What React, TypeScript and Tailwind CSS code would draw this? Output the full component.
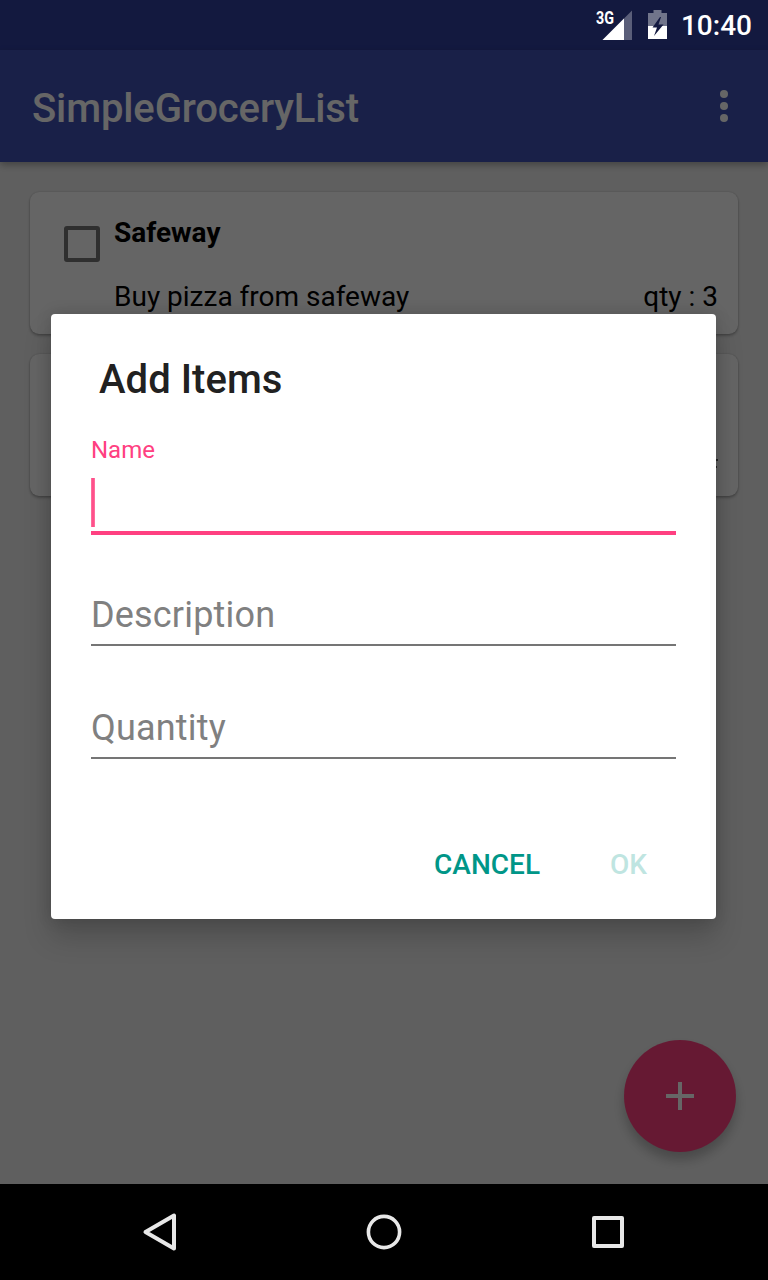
import React from "react";
import type { ReactNode } from "react";

function StatusBar() {
  return (
    <div className="relative z-20 flex h-[50px] items-center justify-end pr-4 text-white">
      <svg width="40" height="34" viewBox="0 0 40 34" className="mr-[12px]">
        <path d="M36 2.5V32H6.500Z" fill="#fff" fillOpacity="0.3" />
        <path d="M28 10.500V32H6.500Z" fill="#fff" />
        <text x="0" y="16" fontFamily="Roboto" fontSize="17.5" fontWeight="700" fill="#fff" textLength="18" lengthAdjust="spacingAndGlyphs">3G</text>
      </svg>
      <svg width="19" height="30" viewBox="0 0 19 30" className="mr-[14px] mb-[2px]">
        <path d="M0 4H5.500V1H13.500V4H19V17H0Z" fill="#fff" fillOpacity="0.4" />
        <path d="M0 17H19V30H0Z" fill="#fff" />
        <path d="M12 8L4.500 18.500H9L6 27L15.500 15.500H10.500L13 8Z" fill="#131940" />
      </svg>
      <span className="pt-px text-[28px] leading-[33px] font-medium">10:40</span>
    </div>
  );
}

function Toolbar() {
  return (
    <header className="relative flex h-28 items-center justify-between bg-[#3f51b5] pr-[39px] pl-8 shadow-[0_3px_7px_rgba(0,0,0,0.3)]">
      <h1 className="pt-1 text-[40px] leading-[47px] font-medium tracking-[-0.12px] text-white">SimpleGroceryList</h1>
      <svg width="10" height="34" viewBox="0 0 10 34" fill="#fff">
        <circle cx="5" cy="5" r="4" />
        <circle cx="5" cy="17" r="4" />
        <circle cx="5" cy="29" r="4" />
      </svg>
    </header>
  );
}

function GroceryCard({ store, item, quantity }: { store: string; item: string; quantity: ReactNode }) {
  return (
    <article className="flex h-[142px] rounded-[9px] bg-[#fcfcfc] pl-[34px] shadow-[0_2px_3px_rgba(0,0,0,0.25),0_0_2px_rgba(0,0,0,0.2)]">
      <div className="mt-[34px] size-9 shrink-0 rounded-[3px] border-4 border-[#757575]" />
      <div className="ml-[14px] flex flex-1 flex-col pt-6 pr-5 text-[28px] leading-[33px] text-black">
        <h2 className="h-[33px] font-bold">{store}</h2>
        <div className="mt-[31px] flex justify-between">
          <span>{item}</span>
          <span className="-mr-px pr-px">{quantity}</span>
        </div>
      </div>
    </article>
  );
}

function QuantityEdge() {
  return (
    <svg width="6" height="33" viewBox="0 0 6 33" fill="#606060">
      <path d="M0 17H6V19H0ZM0 24H5V26H0Z" />
    </svg>
  );
}

function Field({ label }: { label: string }) {
  return (
    <div className="h-[113px] pt-[46px]">
      <div className="h-[55px] border-b-2 border-[#757575] text-[36px] leading-[48px] tracking-[0.18px] text-[#808080]">{label}</div>
    </div>
  );
}

function AddItemsDialog() {
  return (
    <section className="flex h-[605px] w-[665px] flex-col rounded-[4px] bg-white px-10 shadow-[0_18px_28px_rgba(0,0,0,0.18),0_0_16px_rgba(0,0,0,0.14)]">
      <h2 className="mt-[42px] ml-2 text-[40px] leading-[47px] font-medium tracking-[0.05px] text-[#212121]">Add Items</h2>
      <label className="mt-[33px] text-[24px] leading-[28px] text-[#ff4081]">Name</label>
      <div className="mt-[14px] h-[57px] border-b-4 border-[#ff4081]">
        <div className="h-[49px] w-1 bg-linear-to-r from-[#ff78a7] via-[#ff4081] to-[#ff78a7]" />
      </div>
      <div className="mt-[10px]">
        <Field label="Description" />
        <Field label="Quantity" />
      </div>
      <div className="mt-[77px] flex justify-end gap-[70px] pr-[29px] text-[28px] leading-[33px] font-medium">
        <button className="text-[#009688]">CANCEL</button>
        <button className="text-[#bfe5e1]">OK</button>
      </div>
    </section>
  );
}

function NavigationBar() {
  return (
    <nav className="relative z-20 flex h-24 items-center justify-between bg-black px-[140px]">
      <svg width="40" height="40" viewBox="0 0 40 40" fill="none" stroke="#e8e8e8" strokeWidth="4" strokeLinejoin="round">
        <path d="M5.5 20L34 3.5V36.5Z" />
      </svg>
      <svg width="40" height="40" viewBox="0 0 40 40" fill="none" stroke="#e8e8e8" strokeWidth="3.6">
        <circle cx="20" cy="20" r="15.6" />
      </svg>
      <svg width="40" height="40" viewBox="0 0 40 40" fill="none" stroke="#e8e8e8" strokeWidth="4" strokeLinejoin="round">
        <rect x="6" y="6" width="28" height="28" />
      </svg>
    </nav>
  );
}

export default function App() {
  return (
    <div className="relative flex h-[1280px] w-[768px] flex-col overflow-hidden bg-[#303f9f] font-[Roboto,sans-serif]">
      <StatusBar />
      <Toolbar />
      <main className="flex flex-1 flex-col gap-5 bg-[#eeeeee] px-[30px] pt-[30px]">
        <GroceryCard store="Safeway" item="Buy pizza from safeway" quantity="qty : 3" />
        <GroceryCard store="" item="" quantity={<QuantityEdge />} />
      </main>
      <button className="absolute right-8 bottom-32 flex size-28 items-center justify-center rounded-full bg-[#ff4081] shadow-[0_8px_12px_rgba(0,0,0,0.24)]">
        <svg width="28" height="28" viewBox="0 0 28 28" fill="none" stroke="#fff" strokeWidth="4">
          <path d="M14 0V28M0 14H28" />
        </svg>
      </button>
      <NavigationBar />
      <div className="absolute inset-0 z-10 bg-black/60 pt-[314px] pl-[51px]">
        <AddItemsDialog />
      </div>
    </div>
  );
}
